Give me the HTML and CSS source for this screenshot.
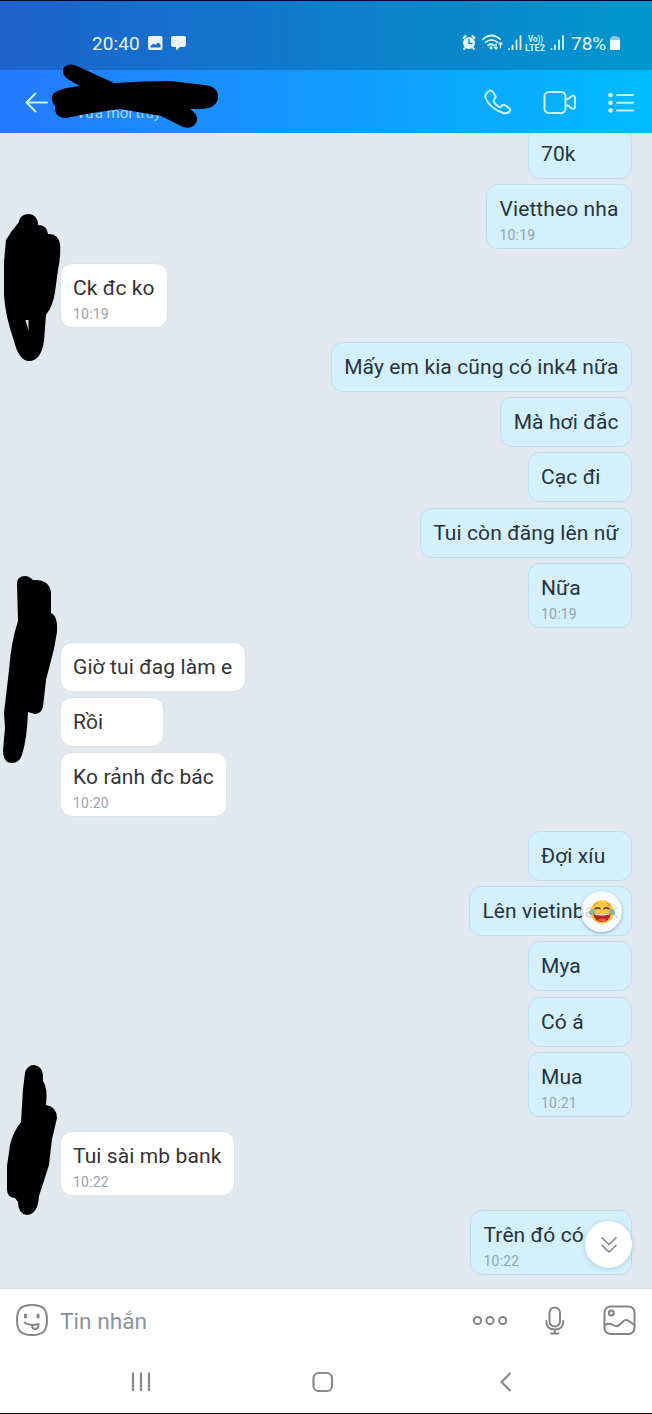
FILE: index.html
```html
<!DOCTYPE html>
<html lang="vi">
<head>
<meta charset="utf-8">
<title>Tin nhắn</title>
<link rel="stylesheet" href="styles.css">
</head>
<body>
<div class="phone">
  <header class="top">
    <div class="status">
      <span class="clock">20:40</span>
      <svg class="status-left" width="42" height="18" viewBox="0 0 42 18"><path fill="#e9f4ff" fill-rule="evenodd" d="M3 2h11q1.500 0 1.500 2v10q0 2-1.500 2H3q-2 0-2-2V4q0-2 2-2zM3.500 13.500h10v-3l-2.500-2-2.500 2.500-2-1.500-3 2.500z"/><path fill="#e9f4ff" d="M26 2h11q2 0 2 2v7q0 2-2 2h-4l-4 3.500V13h-3q-2 0-2-2V4q0-2 2-2z"/></svg>
      <svg class="status-icons" width="104" height="20" viewBox="0 0 104 20" fill="none" stroke="#d9f2fc" stroke-linecap="round">
        <circle cx="8" cy="10" r="6" fill="#e4f6fd" stroke="none"/><path stroke-width="2" d="M2.500 5l2-2M13.500 5l-2-2M4 15l-1 1M12 15l1 1"/><path stroke="#0b84c8" stroke-width="1.300" d="M8 6.500V10.500h3"/>
        <path stroke-width="1.800" d="M22 6.200q8.500-7.500 17 0M24.500 9.400q6-5 12 0M27 12.500q3-2.500 6 0"/><circle cx="30" cy="14.800" r="1.600" fill="#d9f2fc" stroke="none"/><path stroke-width="1.300" d="M35 11v5M33.500 14.500l1.500 1.500 1.500-1.500M39.500 14.500v-5M38 11l1.500-1.500L41 11"/>
        <path stroke-width="1.800" d="M48 16v.2M51.500 12.500V16.200M55.500 7.500V16.200M59.500 3V16.200M90.500 16v.2M94 12.500V16.200M98 7.500V16.200M102 3V16.200"/>
        <text class="volte" x="67" y="9.300" textLength="15" lengthAdjust="spacingAndGlyphs">Vo))</text><text class="volte" x="64" y="17.800" textLength="20" lengthAdjust="spacingAndGlyphs">LTE2</text>
      </svg>
      <span class="percent">78%</span>
      <svg class="battery" width="12" height="16" viewBox="0 0 12 16"><path fill="#8cc9e3" d="M3 1h5v1h1q2 0 2 2v2H1V4q0-2 2-2z"/><path fill="#f0fcff" d="M1 5h10v9q0 1-1 1H2q-1 0-1-1z"/></svg>
    </div>
    <div class="bar">
      <svg class="back" width="26" height="24" viewBox="0 0 26 24"><path d="M23 12.500H3M11.500 3.500L2.500 12.500l9 9"/></svg>
      <div class="who"><span class="seen">Vừa mới truy</span></div>
      <svg class="bar-icons" width="154" height="28" viewBox="0 0 154 28">
        <path d="M2.500 5.500L4.500 3.500Q7 1.500 9 4l2 3q1.500 2-.5 4-1.500 1.500-.5 3 1.500 3 4.500 4.500 1.500 1 3-.5 2-2 4-.5l3.500 2.500q2 1.500.5 3.500-2.500 2.800-7 1.300Q5 19.500 1.500 9.500q-.7-2 1-4z"/>
        <rect x="60.500" y="4" width="21" height="21" rx="4.500"/><path d="M81.500 11h2.500l4-3q3-1 3 2v8.500q0 3-3 2l-4-3h-2.500"/>
        <path d="M133 7h16M133 14.800h16M133 22.500h16"/><g fill="#e6faff" stroke="none"><circle cx="126.500" cy="7" r="2.200"/><circle cx="126.500" cy="14.800" r="2.200"/><circle cx="126.500" cy="22.500" r="2.200"/></g>
      </svg>
    </div>
  </header>

  <main class="chat">
    <section class="group out">
      <div class="msg">70k</div>
      <div class="msg timed">Viettheo nha<time>10:19</time></div>
    </section>
    <section class="group in">
      <div class="msg timed">Ck đc ko<time>10:19</time></div>
    </section>
    <section class="group out">
      <div class="msg">Mấy em kia cũng có ink4 nữa</div>
      <div class="msg">Mà hơi đắc</div>
      <div class="msg">Cạc đi</div>
      <div class="msg">Tui còn đăng lên nữ</div>
      <div class="msg timed">Nữa<time>10:19</time></div>
    </section>
    <section class="group in">
      <div class="msg">Giờ tui đag làm e</div>
      <div class="msg">Rồi</div>
      <div class="msg timed">Ko rảnh đc bác<time>10:20</time></div>
    </section>
    <section class="group out">
      <div class="msg">Đợi xíu</div>
      <div class="msg reacted">Lên vietinbank
        <span class="reaction"><svg width="28" height="28" viewBox="0 0 28 28"><circle cx="14" cy="14" r="11.800" fill="#ffc840"/><path d="M6 8q1-2.500 3.500-3M22 8q-1-2.500-3.500-3" fill="none" stroke="#c98328" stroke-width="1"/><path d="M6 12q3-3.500 6.500-1M22 12q-3-3.500-6.500-1" fill="none" stroke="#75401a" stroke-width="1.600"/><path d="M5 14.500q9 3 18 0-1 9.500-9 9.500t-9-9.500z" fill="#bb281e"/><path d="M6.500 15.300q7.500 2 15 0v1.200q-7.500 2-15 0z" fill="#fff"/><path d="M9 22q5-3 10 0-5 3-10 0z" fill="#f25d48"/><path d="M8 11q-6-.5-7 3 0 4 3 3 2-1 4-6zM20 11q6-.5 7 3 0 4-3 3-2-1-4-6z" fill="#83b999"/></svg></span>
      </div>
      <div class="msg">Mya</div>
      <div class="msg">Có á</div>
      <div class="msg timed">Mua<time>10:21</time></div>
    </section>
    <section class="group in">
      <div class="msg timed">Tui sài mb bank<time>10:22</time></div>
    </section>
    <section class="group out">
      <div class="msg timed last">Trên đó có<time>10:22</time></div>
    </section>
    <button class="jump" aria-label="Xuống cuối"><svg width="20" height="20" viewBox="0 0 20 20"><path d="M2.500 2.500L10 9.500l7.500-7M2.500 10L10 17l7.500-7"/></svg></button>
  </main>

  <footer class="compose">
    <svg class="smile" width="34" height="34" viewBox="0 0 34 34"><path d="M17 2C28 2 32 6 32 17S28 32 17 32 2 28 2 17 6 2 17 2z"/><path d="M10.500 12v2M23 12v2" stroke-width="3"/><path d="M9.500 19.500q5 4 14 1.500M17 22.500q0 3.200 3 3.500 3.500 0 3.500-5"/></svg>
    <span class="placeholder">Tin nhắn</span>
    <svg class="tools" width="166" height="36" viewBox="0 0 166 36">
      <circle cx="6.500" cy="17.500" r="3.600"/><circle cx="19" cy="17.500" r="3.600"/><circle cx="31.700" cy="17.500" r="3.600"/>
      <rect x="78.500" y="4.500" width="10.500" height="19" rx="5.200"/><path d="M75.300 18q0 8.500 8.500 8.500t8.500-8.500M83.800 26.500V30.500M80 30.500h7.500"/>
      <rect x="133.500" y="3.500" width="30" height="27.500" rx="6"/><circle cx="140.300" cy="10" r="2.500"/><path d="M134 22q4-2.500 8 0 4 2.500 7-.5l3-3q3-3 6.500 0l5 3.500"/>
    </svg>
  </footer>
  <nav class="nav">
    <svg width="652" height="60" viewBox="0 0 652 60"><path d="M133 19.500v18.500M141 19.500v18.500M149 19.500v18.500"/><rect x="313.500" y="20" width="18.500" height="18" rx="5"/><path d="M510.500 20l-9 9 9 9"/></svg>
  </nav>

  <svg class="marks" width="652" height="1414" viewBox="0 0 652 1414">
    <path d="M64 67Q70 62 79 67L114 83Q145 81 170 81L205 85Q219 87 218 98 216 109 200 109L190 109Q198 114 197 121 193 130 183 127L161 116 120 109Q95 112 66 118 54 118 55 106 49 98 54 93 60 88 80 86L69 80Q60 74 64 67z"/>
    <path fill-rule="evenodd" d="M19 222Q20 214 29 214 38 215 38 225 47 225 48 234 58 233 60 244 61 256 58 270L55 292Q53 306 46 315L44 341Q41 361 29 361 19 361 14 341 5 315 4 295L4 262 6 240Q11 231 19 222zM25.500 320l3 10.500V320z"/>
    <path d="M17 584Q17 576 25 576 29 576 33 580 49 579 51 592L51 613Q58 616 57 632L54 649 46 680 43 707Q41 714 35 714L28 712Q27 739 22 755 19 763 12 763 3 763 3 750L5 728 4 713 9 670Q11 642 18 621z"/>
    <path d="M25 1073Q27 1065 34 1065 42 1066 43 1075L43 1081Q48 1088 46 1105 57 1107 57 1118L52 1139 49 1165 39 1196Q38 1214 27 1215 18 1214 18 1202L15 1198Q7 1197 7 1190V1166L10 1145Q13 1132 21 1122L23 1089z"/>
  </svg>
</div>
</body>
</html>
```
FILE: styles.css
```css
* { box-sizing: border-box; }
body { margin: 0; font-family: Roboto, "Noto Sans", sans-serif; }
.phone {
  position: relative;
  display: flex;
  flex-direction: column;
  width: 652px;
  height: 1414px;
  overflow: hidden;
  background: #fff;
  border-top: 1px solid #03062b;
  border-bottom: 1px solid #000;
}
svg { display: block; flex: none; }

/* status bar and conversation header */
.top { height: 132px; flex: none; background: linear-gradient(90deg, #257aff, #00bbff); }
.status {
  display: flex;
  align-items: center;
  height: 69px;
  padding: 15px 31px 0 92px;
  color: #e2f2fd;
  font-size: 19px;
  background: linear-gradient(90deg, #1e62cc, #0097cc);
}
.clock { width: 55px; letter-spacing: .1px; }
.status-icons { margin-left: auto; }
.percent { width: 39px; margin-left: 6px; font-size: 19px; }
.battery { margin-left: -1px; }
.volte { font: 700 8.500px Roboto, sans-serif; fill: #d9f2fc; stroke: none; }
.bar { display: flex; align-items: center; height: 63px; padding: 0 14px 0 24px; }
.back, .bar-icons { fill: none; stroke: #c9f2ff; stroke-width: 2; stroke-linecap: round; stroke-linejoin: round; }
.who { flex: 1; padding: 23px 0 0 26px; }
.seen { display: block; white-space: nowrap; color: #a7d6ff; font-size: 15px; line-height: 20px; }

/* conversation */
.chat {
  position: relative;
  display: flex;
  flex-direction: column;
  gap: 13.800px;
  height: 1156px;
  flex: none;
  padding: 0 20px 0 59.500px;
  overflow: hidden;
  background: #e2e8f0;
  border-bottom: 1px solid #d9dce1;
}
.group { display: flex; flex-direction: column; gap: 5.250px; flex: none; }
.group:first-child { margin-top: -4px; }
.out { align-items: flex-end; }
.in { align-items: flex-start; }
.msg {
  position: relative;
  height: 50px;
  min-width: 104.500px;
  padding: 11px 12.500px 0;
  border: 1.500px solid #bfdeec;
  border-radius: 12px;
  background: #d4f0ff;
  color: #26333c;
  font-size: 21px;
  line-height: 26px;
  letter-spacing: .1px;
  white-space: nowrap;
}
.in .msg { border-color: #dde2e8; background: #fff; color: #333; }
.timed { height: 65px; }
time { display: block; margin-top: 3px; color: #92a3ae; font-size: 14px; line-height: 20px; letter-spacing: .2px; }
.in time { color: #9ca4aa; }
.last { width: 162px; }
.reaction {
  position: absolute;
  right: 9px;
  top: 4px;
  display: grid;
  place-items: center;
  width: 41px;
  height: 41px;
  border-radius: 50%;
  background: rgba(255, 255, 255, .82);
  box-shadow: 0 1px 3px rgba(45, 65, 85, .5);
}
.jump {
  position: absolute;
  right: 20px;
  bottom: 20px;
  display: grid;
  place-items: center;
  width: 47px;
  height: 47px;
  padding: 0;
  border: 0;
  border-radius: 50%;
  background: #fff;
  box-shadow: 0 1px 5px rgba(40, 90, 130, .25);
}
.jump svg { fill: none; stroke: #858585; stroke-width: 1.600; }

/* message box and system navigation */
.compose { display: flex; align-items: center; height: 64px; padding: 0 15px; flex: none; }
.smile, .tools { fill: none; stroke: #858585; stroke-width: 2; stroke-linecap: round; stroke-linejoin: round; }
.smile { margin-top: -2px; }
.placeholder { margin-left: 11px; color: #8a949d; font-size: 22.700px; }
.tools { margin-left: auto; }
.nav svg { fill: none; stroke: #8b8b8b; stroke-width: 2.200; }

/* scribbled-out name and avatars */
.marks { position: absolute; left: 0; top: -1px; fill: #000; pointer-events: none; }
```
